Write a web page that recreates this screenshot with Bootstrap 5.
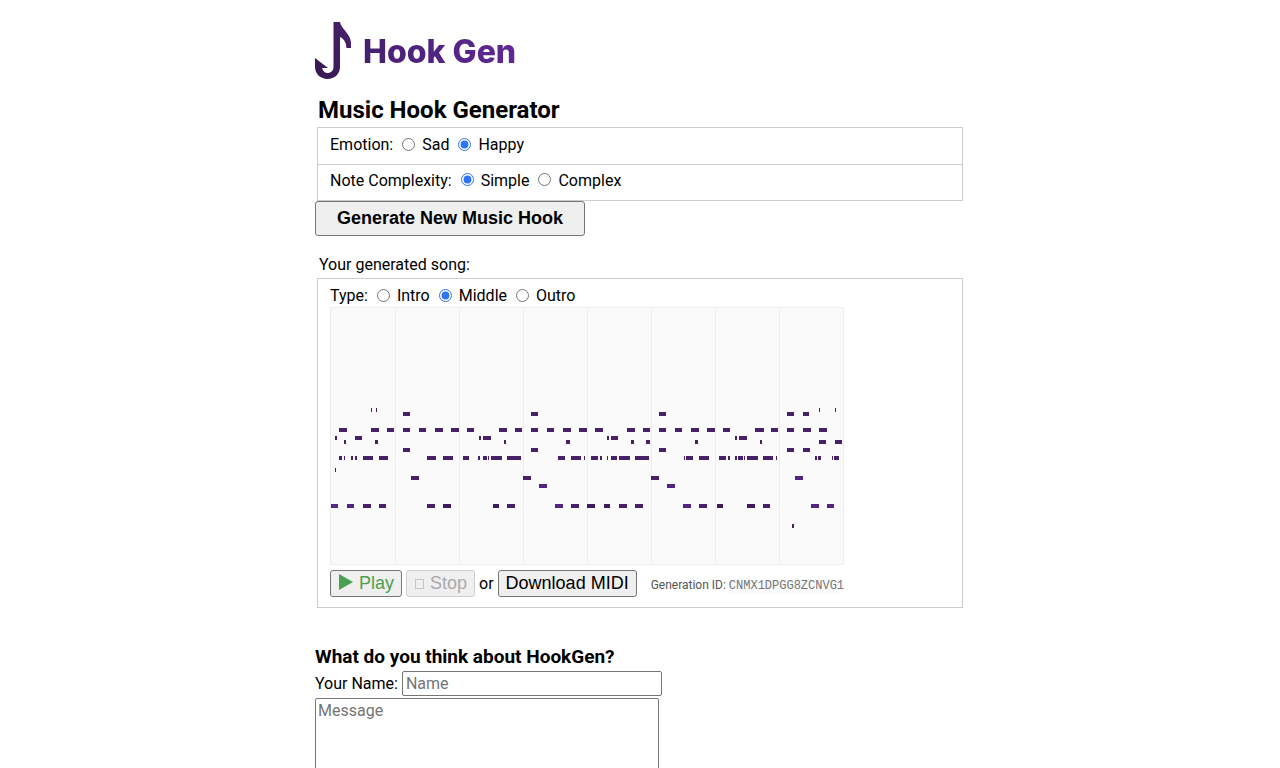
<!DOCTYPE html>
<html lang="en">
<head>
<meta charset="utf-8">
<meta name="viewport" content="width=device-width, initial-scale=1">
<title>Hook Gen</title>
<link href="https://cdn.jsdelivr.net/npm/bootstrap@5.3.0/dist/css/bootstrap.min.css" rel="stylesheet">
<style>
  body { font-family: Roboto, sans-serif; font-size: 16px; line-height: 20px; color: #000; background: #fff; }
  .page { max-width: 650px; }
  .brand { margin-top: 22px; width: max-content; color: #54258a; }
  .brand svg { width: 37px; height: 57px; }
  .brand-name {
    font: 800 32px/36px Inter, sans-serif; margin-left: 11px; padding-top: 2px;
    background: linear-gradient(90deg, #45206f, #5f2896);
    -webkit-background-clip: text; background-clip: text; color: transparent;
  }
  h1 { font-size: 24px; line-height: 28px; font-weight: 700; margin: 17px 3px 3px; }
  h2 { font-size: 19px; line-height: 22px; font-weight: 700; margin: 38px 0 3px; }
  .panel { border: 1px solid #ccc; margin: 0 2px; padding: 0 12px; }
  .option-row { height: 36px; padding-bottom: 2px; }
  .option-row + .option-row { border-top: 1px solid #ccc; margin: 0 -12px; padding-left: 12px; padding-bottom: 4px; }
  input[type=radio] { width: 13px; height: 13px; margin: 0 7px 2px 9px; accent-color: #2f74f5; }
  .song-label { margin: 19px 4px 3px; }
  .song-panel { padding-top: 7px; padding-bottom: 10px; }
  .plain-btn { font-family: "Liberation Sans", sans-serif; font-size: 18px; line-height: 21px; color: #000;
    background: #efefef; border: 1px solid #767676; border-radius: 3px; padding: 2px 7px; }
  .generate { font-weight: 700; padding: 6px 21px; }
  .play { color: #4a9f50; }
  .play svg { width: 15px; height: 16px; margin: 0 6px 4px 0; }
  .plain-btn:disabled { color: #aaa; border-color: #d0d0d0; }
  .stop svg { width: 9px; height: 10px; margin: 0 6px 0 1px; }
  .roll { width: 514px; max-width: 100%; display: block; margin: 1px 0 5px; }
  .gen-id { font-size: 12px; line-height: 16px; color: #555; margin-left: 14px; padding-top: 2px; }
  .gen-id code { font: 12px/14px "Liberation Mono", monospace; color: #777; background: #fafafa; }
  .field { border: 1px solid #767676; padding: 1px 3px; border-radius: 2px; font: 16px/20px Roboto, sans-serif; }
  .field::placeholder { color: #757575; }
  .name-field { width: 260px; height: 25px; }
  .message-field { width: 344px; height: 110px; padding: 2px; margin-top: 2px; }
</style>
</head>
<body>
<main class="page mx-auto">
  <div class="brand d-flex align-items-center">
    <svg viewBox="0 0 37 57" aria-hidden="true">
      <defs><linearGradient id="hook" x1="0" y1="1" x2="1" y2="0"><stop stop-color="#371a50"/><stop offset="1" stop-color="#48216f"/></linearGradient></defs>
      <path fill="url(#hook)" d="M18.500 0H25C26 7 36 12 36 21V26H31.500C31 20 29 17 25 15V45C25 52 19.500 57 12.500 57C5.500 57 0 52 0 45V36L13 46H7C8 49 10 51 12.500 51C16 51 18.500 48.500 18.500 45Z"/>
    </svg>
    <span class="brand-name">Hook Gen</span>
  </div>

  <h1>Music Hook Generator</h1>
  <div class="panel">
    <div class="option-row d-flex align-items-center">
      <span>Emotion:</span>
      <input type="radio" name="emotion" id="sad"><label for="sad">Sad</label>
      <input type="radio" name="emotion" id="happy" checked><label for="happy">Happy</label>
    </div>
    <div class="option-row d-flex align-items-center">
      <span>Note Complexity:</span>
      <input type="radio" name="complexity" id="simple" checked><label for="simple">Simple</label>
      <input type="radio" name="complexity" id="complex"><label for="complex">Complex</label>
    </div>
  </div>
  <button type="button" class="plain-btn generate d-block">Generate New Music Hook</button>

  <p class="song-label">Your generated song:</p>
  <div class="panel song-panel">
    <div class="d-flex align-items-center">
      <span>Type:</span>
      <input type="radio" name="part" id="intro"><label for="intro">Intro</label>
      <input type="radio" name="part" id="middle" checked><label for="middle">Middle</label>
      <input type="radio" name="part" id="outro"><label for="outro">Outro</label>
    </div>
    <svg class="roll" viewBox="-1 -1 514 258" role="img" aria-label="Piano roll" shape-rendering="crispEdges">
      <rect x="-1" y="-1" width="514" height="258" fill="#eee"/>
      <rect width="512" height="256" fill="#fafafa"/>
      <path fill="#eee" d="M64 0h1v256h-1zM128 0h1v256h-1zM192 0h1v256h-1zM256 0h1v256h-1zM320 0h1v256h-1zM384 0h1v256h-1zM448 0h1v256h-1z"/>
      <g id="notes"></g>
    </svg>
    <div class="d-flex align-items-center">
      <button type="button" class="plain-btn play"><svg viewBox="0 0 15 16" aria-hidden="true"><path fill="currentColor" d="M1 0L15 8L1 16Z"/></svg>Play</button>
      <button type="button" class="plain-btn stop ms-1" disabled><svg viewBox="0 0 9 10" aria-hidden="true"><path fill="none" stroke="#c4c4c4" d="M.5 .5h8v9h-8z"/></svg>Stop</button>
      <span class="mx-1">or</span>
      <button type="button" class="plain-btn">Download MIDI</button>
      <span class="gen-id">Generation ID: <code>CNMX1DPGG8ZCNVG1</code></span>
    </div>
  </div>

  <form>
    <h2>What do you think about HookGen?</h2>
    <div class="d-flex align-items-center">
      <label for="name" class="me-1">Your Name:</label>
      <input type="text" id="name" class="field name-field" placeholder="Name">
    </div>
    <textarea class="field message-field d-block" aria-label="Message" placeholder="Message"></textarea>
  </form>
</main>
<script src="https://cdn.jsdelivr.net/npm/bootstrap@5.3.0/dist/js/bootstrap.bundle.min.js"></script>
<script>
  // Each pitch row: top edge, then start:length pairs.
  const rows = {
    100: "40:1 45:1 488:1 504:1",
    104: "72:7 200:7 328:7 456:7 472:6",
    120: "8:8 40:8 56:7 72:7 88:7 104:8 120:8 136:7 168:8 184:7 200:7 216:7 232:8 248:8 264:8 296:8 312:7 328:7 344:7 360:8 376:8 392:7 424:9 440:7 456:7 472:8 488:8",
    128: "4:2 24:7 148:2 152:8 276:2 280:7 404:2 408:8",
    132: "13:2 44:3 173:2 235:4 300:3 315:4 364:3 429:2 488:7 504:7",
    140: "72:7 200:7 328:7 456:7 472:7",
    148: "8:3 13:1 20:2 24:2 32:10 48:9 96:9 112:10 132:6 147:2 152:4 157:1 160:11 176:14 227:7 240:10 253:1 260:7 269:2 276:1 280:6 288:11 304:14 353:1 355:7 368:10 388:7 397:2 404:2 407:5 413:1 416:11 432:10 445:1 484:2 487:3 501:1 503:5",
    160: "4:1",
    168: "80:8 192:8 320:8 464:8",
    176: "208:8 336:8",
    196: "0:7 16:7 32:8 48:7 96:8 112:8 162:6 176:8 224:8 240:8 256:8 273:6 288:8 304:8 352:8 368:8 386:6 416:8 432:7 480:8 496:7",
    216: "461:2"
  };
  const shades = { 0: "#55278a", 16: "#4f2580", 112: "#3d1c5c", 162: "#3d1c5c", 208: "#52267f", 224: "#52267f", 256: "#3d1c5c", 273: "#3d1c5c", 336: "#52267f", 352: "#52267f", 386: "#3d1c5c", 416: "#3d1c5c", 464: "#52267f", 480: "#52267f", 496: "#52267f" };
  const notes = document.getElementById("notes");
  for (const [y, row] of Object.entries(rows)) {
    for (const pair of row.split(" ")) {
      const [x, w] = pair.split(":");
      const r = document.createElementNS("http://www.w3.org/2000/svg", "rect");
      const fill = (y > 150 && shades[x]) || "#471f6b";
      for (const [k, v] of Object.entries({ x, y, width: w, height: 4, fill })) r.setAttribute(k, v);
      notes.append(r);
    }
  }
</script>
</body>
</html>
